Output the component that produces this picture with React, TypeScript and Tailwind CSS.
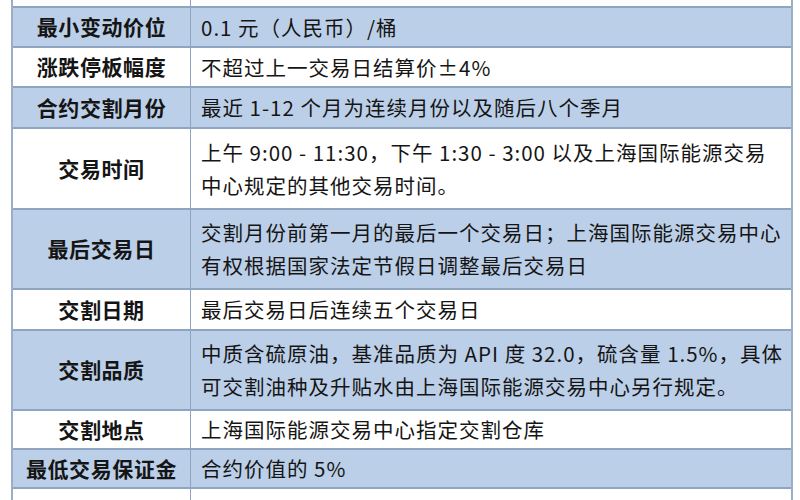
import React from "react";

type Row = { label: string; lines: string[]; h: string; blue: boolean };

const rows: Row[] = [
  { label: "报价单位", lines: ["元（人民币）/桶（交易报价为不含税价格）"], h: "h-[40px]", blue: false },
  { label: "最小变动价位", lines: ["0.1 元（人民币）/桶"], h: "h-[40px]", blue: true },
  { label: "涨跌停板幅度", lines: ["不超过上一交易日结算价±4%"], h: "h-[40px]", blue: false },
  { label: "合约交割月份", lines: ["最近 1-12 个月为连续月份以及随后八个季月"], h: "h-[41px]", blue: true },
  {
    label: "交易时间",
    lines: ["上午 9:00 - 11:30，下午 1:30 - 3:00 以及上海国际能源交易", "中心规定的其他交易时间。"],
    h: "h-[81px]",
    blue: false,
  },
  {
    label: "最后交易日",
    lines: ["交割月份前第一月的最后一个交易日；上海国际能源交易中心", "有权根据国家法定节假日调整最后交易日"],
    h: "h-[80px]",
    blue: true,
  },
  { label: "交割日期", lines: ["最后交易日后连续五个交易日"], h: "h-[41px]", blue: false },
  {
    label: "交割品质",
    lines: ["中质含硫原油，基准品质为 API 度 32.0，硫含量 1.5%，具体", "可交割油种及升贴水由上海国际能源交易中心另行规定。"],
    h: "h-[80px]",
    blue: true,
  },
  { label: "交割地点", lines: ["上海国际能源交易中心指定交割仓库"], h: "h-[39px]", blue: false },
  { label: "最低交易保证金", lines: ["合约价值的 5%"], h: "h-[39px]", blue: true },
  { label: "交割方式", lines: ["实物交割"], h: "h-[56px]", blue: false },
];

export default function App() {
  return (
    <div className="w-[800px] h-[500px] overflow-hidden bg-white">
      <div
        className="ml-[11px] w-[782px] -mt-[32px] border-l-2 border-r-2 border-[#9aaec8] text-[#151515]"
        style={{ fontFamily: '"Noto Sans CJK SC", "Noto Sans", sans-serif' }}
      >
        {rows.map((r, i) => (
          <div
            key={i}
            className={`flex ${r.h} border-b-2 border-[#8ea4c1] ${r.blue ? "bg-[#bccfe8]" : "bg-white"}`}
          >
            <div className="w-[178px] shrink-0 border-r border-[#8ea4c1] flex items-center justify-center font-bold text-[21px] tracking-[0.6px]">
              {r.label}
            </div>
            <div className="flex-1 pl-[10px] flex flex-col justify-center text-[20.5px] leading-[33px] whitespace-pre tracking-[1px]">
              {r.lines.map((l, j) => (
                <div key={j}>{l}</div>
              ))}
            </div>
          </div>
        ))}
      </div>
    </div>
  );
}
